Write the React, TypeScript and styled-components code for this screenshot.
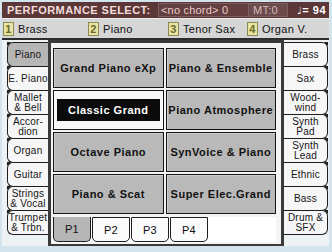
import React from "react";
import styled, { createGlobalStyle } from "styled-components";

const GlobalStyle = createGlobalStyle`
  html, body {
    margin: 0;
    padding: 0;
    background: #d3e4ec;
  }
  body {
    font-family: "Liberation Sans", Arial, sans-serif;
  }
`;

const Screen = styled.div`
  width: 332px;
  height: 252px;
  box-sizing: border-box;
  padding: 2px 3px 6px 2px;
  background: #d3e4ec;
  display: flex;
  flex-direction: column;
`;

const TitleBar = styled.div`
  height: 16px;
  background: #5b3737;
  display: flex;
  align-items: center;
  color: #f3dede;
  font-size: 11px;
`;

const Title = styled.div`
  width: 151px;
  padding-left: 5px;
  font-weight: bold;
  letter-spacing: 0.45px;
  white-space: nowrap;
`;

const ChordBox = styled.div`
  width: 90px;
  height: 14px;
  box-sizing: border-box;
  border: 1px solid #7e5e5e;
  border-right: none;
  background: #643f3f;
  padding-left: 2px;
  line-height: 12px;
  color: #e8cccc;
  letter-spacing: 0.2px;
  white-space: nowrap;
  overflow: hidden;
`;

const Meter = styled.div`
  width: 40px;
  height: 14px;
  box-sizing: border-box;
  border: 1px solid #7e5e5e;
  background: #6a4a4a;
  padding-left: 4px;
  line-height: 12px;
  color: #d8bcbc;
  letter-spacing: 0.3px;
`;

const Tempo = styled.div`
  flex: 1;
  text-align: right;
  padding-right: 3px;
  font-weight: bold;
  color: #ffffff;
  letter-spacing: 0.5px;
  white-space: nowrap;

  span {
    font-family: "DejaVu Sans", sans-serif;
    font-weight: normal;
    font-size: 10px;
  }
`;

const TrackRow = styled.div`
  height: 20px;
  background: #d6d6d6;
  display: grid;
  grid-template-columns: 85px 80px 79px 1fr;
  align-items: center;
  padding-left: 1px;
  border-top: 1px solid #ececec;
  box-sizing: border-box;
`;

const Track = styled.div`
  display: flex;
  align-items: center;
  gap: 4px;
  font-size: 11px;
  color: #111;
  letter-spacing: 0.3px;
`;

const TrackNum = styled.span`
  width: 11px;
  height: 14px;
  box-sizing: border-box;
  border: 1px solid #8d8a5a;
  background: #e7e3a1;
  color: #6b6a2a;
  font-weight: bold;
  font-size: 11px;
  line-height: 13px;
  text-align: center;
`;

const Main = styled.div`
  flex: 1;
  display: flex;
  background: #edf2f4;
  border-top: 2px solid #2e2e2e;
`;

const SideColumn = styled.div<{ $side: "left" | "right" }>`
  width: ${(p) => (p.$side === "left" ? 46 : 45)}px;
  box-sizing: border-box;
  padding-top: 2px;
  padding-left: ${(p) => (p.$side === "left" ? 5 : 0)}px;
  padding-right: ${(p) => (p.$side === "right" ? 1 : 0)}px;
  display: flex;
  flex-direction: column;
`;

const SideTab = styled.div<{ $side: "left" | "right"; $active?: boolean }>`
  position: relative;
  height: 25px;
  margin-top: -1px;
  box-sizing: border-box;
  border: 1px solid #1e1e1e;
  ${(p) => (p.$side === "left" ? "border-right: none;" : "border-left: none;")}
  border-radius: ${(p) => (p.$side === "left" ? "6px 0 0 6px" : "0 6px 6px 0")};
  background: ${(p) => (p.$active ? "#b6b6b6" : "#f6f6f6")};
  display: flex;
  align-items: center;
  justify-content: center;
  text-align: center;
  font-size: 10px;
  line-height: 10px;
  letter-spacing: 0.2px;
  color: #151515;
  &:first-child {
    margin-top: 0;
  }
  &::before {
    content: "";
    position: absolute;
    top: -1px;
    ${(p) => (p.$side === "left" ? "left: -1px;" : "right: -1px;")}
    width: 0;
    height: 0;
    border-top: 4px solid #1e1e1e;
    ${(p) =>
      p.$side === "left"
        ? "border-right: 4px solid transparent;"
        : "border-left: 4px solid transparent;"}
  }
`;

const Center = styled.div`
  width: 236px;
  box-sizing: border-box;
  border: 3px solid #3a3a3a;
  border-bottom-width: 2px;
  background: #f4f4f4;
  padding: 5px 5px 1px 2px;
  display: flex;
  flex-direction: column;
`;

const Grid = styled.div`
  display: grid;
  grid-template-columns: 1fr 1fr;
  grid-template-rows: repeat(4, 40px);
  gap: 2px;
`;

const Cell = styled.div<{ $selected?: boolean }>`
  box-sizing: border-box;
  border: 1px solid #161616;
  background: ${(p) => (p.$selected ? "#f7f7f7" : "#b9b9b9")};
  box-shadow: ${(p) => (p.$selected ? "none" : "inset 1px 1px 0 #cfcfcf")};
  display: flex;
  align-items: center;
  justify-content: center;
  padding: ${(p) => (p.$selected ? "8px 3px" : "0")};
  font-size: 11px;
  font-weight: bold;
  letter-spacing: 0.5px;
  color: #111;
  white-space: nowrap;
`;

const SelectedLabel = styled.div`
  width: 100%;
  height: 100%;
  background: #0b0b0b;
  color: #ffffff;
  display: flex;
  align-items: center;
  justify-content: center;
`;

const PageTabs = styled.div`
  margin-top: 3px;
  display: flex;
  gap: 1px;
  height: 25px;
  background: #ffffff;
`;

const PageTab = styled.div<{ $active?: boolean }>`
  width: 38px;
  box-sizing: border-box;
  border: 1px solid #1e1e1e;
  ${(p) => (p.$active ? "border-top: none;" : "")}
  border-radius: 0 0 5px 5px;
  background: ${(p) => (p.$active ? "#b6b6b6" : "#fbfbfb")};
  display: flex;
  align-items: center;
  justify-content: center;
  font-size: 11px;
  color: #111;
  letter-spacing: 0.3px;
`;

const leftTabs = [
  ["Piano"],
  ["E. Piano"],
  ["Mallet", "& Bell"],
  ["Accor-", "dion"],
  ["Organ"],
  ["Guitar"],
  ["Strings", "& Vocal"],
  ["Trumpet", "& Trbn."],
];

const rightTabs = [
  ["Brass"],
  ["Sax"],
  ["Wood-", "wind"],
  ["Synth", "Pad"],
  ["Synth", "Lead"],
  ["Ethnic"],
  ["Bass"],
  ["Drum &", "SFX"],
];

const sounds = [
  "Grand Piano eXp",
  "Piano & Ensemble",
  "Classic Grand",
  "Piano Atmosphere",
  "Octave Piano",
  "SynVoice & Piano",
  "Piano & Scat",
  "Super Elec.Grand",
];

const tracks = ["Brass", "Piano", "Tenor Sax", "Organ V."];

const renderLabel = (lines: string[]) =>
  lines.map((line, i) => (
    <React.Fragment key={i}>
      {i > 0 && <br />}
      {line}
    </React.Fragment>
  ));

const App = () => {
  return (
    <>
      <GlobalStyle />
      <Screen>
        <TitleBar>
          <Title>PERFORMANCE SELECT:</Title>
          <ChordBox>&lt;no chord&gt; 0</ChordBox>
          <Meter>MT:0</Meter>
          <Tempo>
            <span>♩</span>= 94
          </Tempo>
        </TitleBar>

        <TrackRow>
          {tracks.map((t, i) => (
            <Track key={t}>
              <TrackNum>{i + 1}</TrackNum>
              {t}
            </Track>
          ))}
        </TrackRow>

        <Main>
          <SideColumn $side="left">
            {leftTabs.map((lines, i) => (
              <SideTab key={i} $side="left" $active={i === 0}>
                <span>{renderLabel(lines)}</span>
              </SideTab>
            ))}
          </SideColumn>

          <Center>
            <Grid>
              {sounds.map((s, i) =>
                i === 2 ? (
                  <Cell key={s} $selected>
                    <SelectedLabel>{s}</SelectedLabel>
                  </Cell>
                ) : (
                  <Cell key={s}>{s}</Cell>
                )
              )}
            </Grid>
            <PageTabs>
              {["P1", "P2", "P3", "P4"].map((p, i) => (
                <PageTab key={p} $active={i === 0}>
                  {p}
                </PageTab>
              ))}
            </PageTabs>
          </Center>

          <SideColumn $side="right">
            {rightTabs.map((lines, i) => (
              <SideTab key={i} $side="right">
                <span>{renderLabel(lines)}</span>
              </SideTab>
            ))}
          </SideColumn>
        </Main>
      </Screen>
    </>
  );
};

export default App;
